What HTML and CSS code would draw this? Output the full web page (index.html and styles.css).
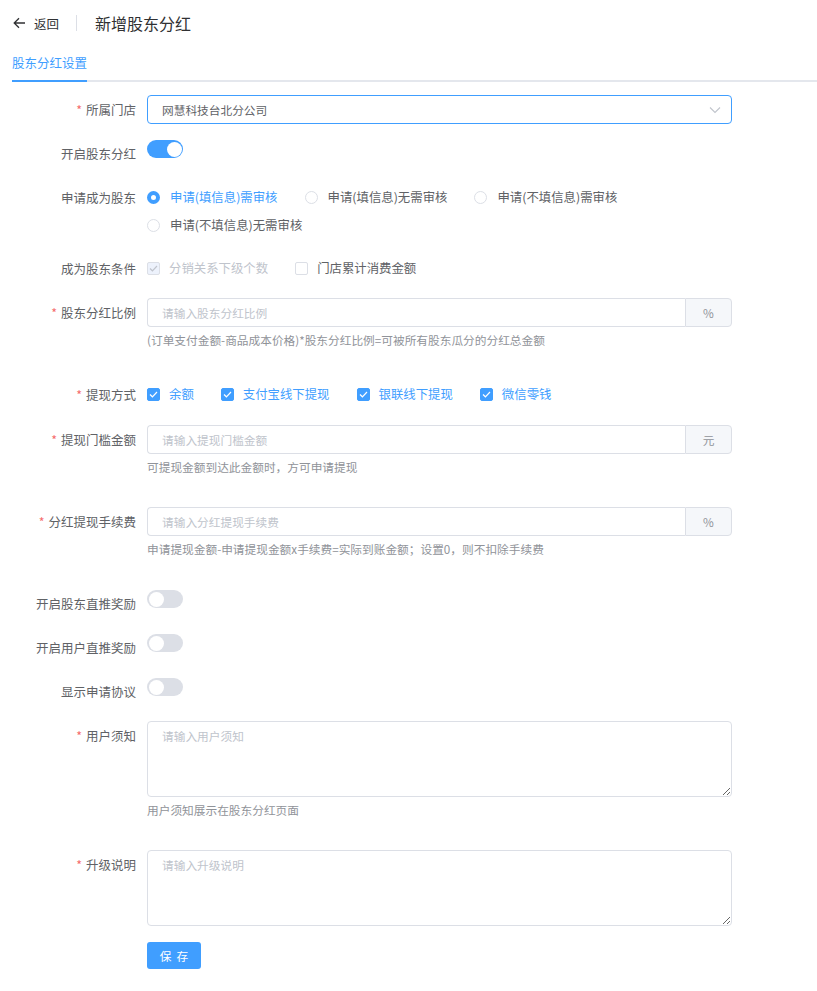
FILE: index.html
```html
<!DOCTYPE html>
<html lang="zh-CN">
<head>
<meta charset="UTF-8">
<meta name="viewport" content="width=device-width, initial-scale=1.0">
<link rel="stylesheet" href="styles.css">
</head>
<body>
  <div class="page-header">
    <div class="back">
      <svg class="back-icon" width="13" height="12" viewBox="0 0 13 12"><path d="M12 6H1.5M6 1.2L1.2 6 6 10.8" fill="none" stroke="#303133" stroke-width="1.3"/></svg>
      <span>返回</span>
    </div>
    <div class="header-divider"></div>
    <div class="header-title">新增股东分红</div>
  </div>

  <div class="tabs">
    <div class="tab active">股东分红设置</div>
  </div>

  <div class="form">
    <div class="form-item">
      <label class="form-label"><i class="req">*</i>所属门店</label>
      <div class="form-content">
        <div class="select">
          <span>网慧科技台北分公司</span>
          <svg width="12" height="8" viewBox="0 0 12 8"><path d="M1 1.5l5 5 5-5" fill="none" stroke="#c0c4cc" stroke-width="1.1"/></svg>
        </div>
      </div>
    </div>

    <div class="form-item">
      <label class="form-label">开启股东分红</label>
      <div class="form-content"><span class="switch on"></span></div>
    </div>

    <div class="form-item">
      <label class="form-label">申请成为股东</label>
      <div class="form-content options">
        <span class="radio checked"><i></i>申请(填信息)需审核</span>
        <span class="radio"><i></i>申请(填信息)无需审核</span>
        <span class="radio"><i></i>申请(不填信息)需审核</span>
        <span class="radio"><i></i>申请(不填信息)无需审核</span>
      </div>
    </div>

    <div class="form-item">
      <label class="form-label">成为股东条件</label>
      <div class="form-content options">
        <span class="check disabled"><i><svg width="9" height="7" viewBox="0 0 9 7"><path d="M1 3.5l2.4 2.3L8 1" fill="none" stroke="#c0c4cc" stroke-width="1.2"/></svg></i>分销关系下级个数</span>
        <span class="check"><i></i>门店累计消费金额</span>
      </div>
    </div>

    <div class="form-item">
      <label class="form-label"><i class="req">*</i>股东分红比例</label>
      <div class="form-content">
        <div class="input-group">
          <input class="input" placeholder="请输入股东分红比例">
          <span class="append">%</span>
        </div>
        <div class="hint">(订单支付金额-商品成本价格)*股东分红比例=可被所有股东瓜分的分红总金额</div>
      </div>
    </div>

    <div class="form-item loose">
      <label class="form-label"><i class="req">*</i>提现方式</label>
      <div class="form-content options">
        <span class="check checked"><i><svg width="9" height="7" viewBox="0 0 9 7"><path d="M1 3.5l2.4 2.3L8 1" fill="none" stroke="#fff" stroke-width="1.2"/></svg></i>余额</span>
        <span class="check checked"><i><svg width="9" height="7" viewBox="0 0 9 7"><path d="M1 3.5l2.4 2.3L8 1" fill="none" stroke="#fff" stroke-width="1.2"/></svg></i>支付宝线下提现</span>
        <span class="check checked"><i><svg width="9" height="7" viewBox="0 0 9 7"><path d="M1 3.5l2.4 2.3L8 1" fill="none" stroke="#fff" stroke-width="1.2"/></svg></i>银联线下提现</span>
        <span class="check checked"><i><svg width="9" height="7" viewBox="0 0 9 7"><path d="M1 3.5l2.4 2.3L8 1" fill="none" stroke="#fff" stroke-width="1.2"/></svg></i>微信零钱</span>
      </div>
    </div>

    <div class="form-item">
      <label class="form-label"><i class="req">*</i>提现门槛金额</label>
      <div class="form-content">
        <div class="input-group">
          <input class="input" placeholder="请输入提现门槛金额">
          <span class="append">元</span>
        </div>
        <div class="hint">可提现金额到达此金额时，方可申请提现</div>
      </div>
    </div>

    <div class="form-item">
      <label class="form-label"><i class="req">*</i>分红提现手续费</label>
      <div class="form-content">
        <div class="input-group">
          <input class="input" placeholder="请输入分红提现手续费">
          <span class="append">%</span>
        </div>
        <div class="hint">申请提现金额-申请提现金额x手续费=实际到账金额；设置0，则不扣除手续费</div>
      </div>
    </div>

    <div class="form-item">
      <label class="form-label">开启股东直推奖励</label>
      <div class="form-content"><span class="switch"></span></div>
    </div>

    <div class="form-item">
      <label class="form-label">开启用户直推奖励</label>
      <div class="form-content"><span class="switch"></span></div>
    </div>

    <div class="form-item">
      <label class="form-label">显示申请协议</label>
      <div class="form-content"><span class="switch"></span></div>
    </div>

    <div class="form-item">
      <label class="form-label"><i class="req">*</i>用户须知</label>
      <div class="form-content">
        <textarea class="textarea" placeholder="请输入用户须知"></textarea>
        <div class="hint">用户须知展示在股东分红页面</div>
      </div>
    </div>

    <div class="form-item">
      <label class="form-label"><i class="req">*</i>升级说明</label>
      <div class="form-content">
        <textarea class="textarea" placeholder="请输入升级说明"></textarea>
      </div>
    </div>

    <div class="form-item">
      <label class="form-label"></label>
      <div class="form-content"><button class="btn-primary">保存</button></div>
    </div>
  </div>
</body>
</html>
```

FILE: styles.css
```css
body {
  margin: 0;
  font-family: "Noto Sans CJK SC", "Noto Sans", sans-serif;
  color: #606266;
  background: #fff;
}

/* header */
.page-header {
  height: 46px;
  display: flex;
  align-items: center;
  padding-left: 13px;
}

.back {
  display: flex;
  align-items: center;
  gap: 8px;
  font-size: 12.5px;
  color: #303133;
}

.header-divider {
  width: 1px;
  height: 16px;
  background: #dcdfe6;
  margin: 0 18px 0 17px;
}

.header-title {
  font-size: 16px;
  color: #303133;
}

/* tabs */
.tabs {
  margin-left: 12px;
  display: flex;
  border-bottom: 2px solid #e4e7ed;
}

.tab {
  height: 34px;
  line-height: 34px;
  font-size: 12.5px;
  color: #303133;
  margin-bottom: -2px;
  border-bottom: 2px solid transparent;
}

.tab.active {
  color: #409eff;
  border-bottom-color: #409eff;
}

/* form */
.form {
  padding-top: 13px;
  width: 732px;
}

.form-item {
  display: flex;
  margin-bottom: 15px;
}

.form-item.loose {
  margin-bottom: 16px;
}

.form-label {
  width: 136px;
  flex-shrink: 0;
  padding-right: 11px;
  text-align: right;
  font-size: 12.5px;
  line-height: 29px;
  color: #606266;
}

.req {
  font-style: normal;
  color: #f56c6c;
  margin-right: 4px;
}

.form-content {
  flex: 1;
  min-height: 29px;
  font-size: 11.7px;
}

.select {
  height: 29px;
  box-sizing: border-box;
  border: 1px solid #409eff;
  border-radius: 4px;
  display: flex;
  align-items: center;
  justify-content: space-between;
  padding: 0 10px 0 14px;
  color: #606266;
}

/* switch */
.switch {
  display: block;
  position: relative;
  width: 36px;
  height: 18px;
  margin-top: 1px;
  border-radius: 9px;
  background: #dcdfe6;
}

.switch::after {
  content: "";
  position: absolute;
  top: 1.5px;
  left: 1.5px;
  width: 15px;
  height: 15px;
  border-radius: 50%;
  background: #fff;
}

.switch.on {
  background: #409eff;
}

.switch.on::after {
  left: 19.5px;
}

/* radio / checkbox */
.options {
  display: flex;
  flex-wrap: wrap;
  column-gap: 27px;
  font-size: 12.4px;
}

.radio,
.check {
  display: flex;
  align-items: center;
  height: 28px;
  line-height: 28px;
  color: #606266;
  white-space: nowrap;
}

.radio i {
  width: 13px;
  height: 13px;
  box-sizing: border-box;
  border: 1px solid #dcdfe6;
  border-radius: 50%;
  margin-right: 10px;
  background: #fff;
}

.radio.checked {
  color: #409eff;
}

.radio.checked i {
  border: 4px solid #409eff;
}

.check i {
  width: 13px;
  height: 13px;
  box-sizing: border-box;
  border: 1px solid #dcdfe6;
  border-radius: 2px;
  margin-right: 9px;
  display: flex;
  align-items: center;
  justify-content: center;
  background: #fff;
}

.check.checked {
  color: #409eff;
}

.check.checked i {
  background: #409eff;
  border-color: #409eff;
}

.check.disabled {
  color: #c0c4cc;
}

.check.disabled i {
  background: #edf2fc;
}

/* inputs */
.input-group {
  display: flex;
  height: 29px;
}

.input {
  flex: 1;
  min-width: 0;
  box-sizing: border-box;
  height: 29px;
  border: 1px solid #dcdfe6;
  border-right: none;
  border-radius: 4px 0 0 4px;
  padding: 0 14px;
  font: inherit;
  color: #606266;
  outline: none;
}

.input::placeholder,
.textarea::placeholder {
  color: #c0c4cc;
}

.append {
  width: 47px;
  box-sizing: border-box;
  border: 1px solid #dcdfe6;
  border-radius: 0 4px 4px 0;
  background: #f5f7fa;
  color: #909399;
  display: flex;
  align-items: center;
  justify-content: center;
}

.hint {
  line-height: 26px;
  margin-bottom: 12px;
  color: #909399;
}

.textarea {
  display: block;
  width: 100%;
  height: 76px;
  box-sizing: border-box;
  border: 1px solid #dcdfe6;
  border-radius: 4px;
  padding: 4px 14px;
  font: inherit;
  line-height: 19px;
  color: #606266;
  outline: none;
}

.btn-primary {
  width: 54px;
  height: 27px;
  border: none;
  border-radius: 3px;
  background: #409eff;
  color: #fff;
  font: inherit;
  font-size: 11.7px;
  letter-spacing: 5px;
  text-indent: 5px;
  margin-top: 1px;
}
```
